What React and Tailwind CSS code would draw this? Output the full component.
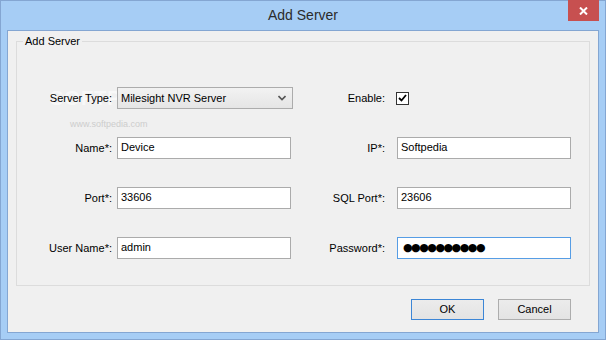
import React from "react";

const font = { fontFamily: '"Liberation Sans", Arial, sans-serif' };

function Label({ children, right }) {
  return (
    <div className={`relative z-10 flex items-center justify-end text-[11px] text-black ${right ? "pr-[12px]" : "pr-[5px]"}`}>
      {children}
    </div>
  );
}

function TextBox({ value, focused }) {
  return (
    <div
      className={`flex h-[22px] w-[174px] items-center border bg-white pb-[1px] pl-[3px] text-[11px] text-black ${
        focused ? "border-[#569de5]" : "border-[#ababab]"
      }`}
    >
      {value}
    </div>
  );
}

export default function App() {
  return (
    <div
      className="relative flex h-[340px] w-[606px] flex-col border border-[#84a6d2] bg-[#a6cdf5]"
      style={font}
    >
      {/* Title bar */}
      <div className="grid h-[29px] grid-cols-[1fr_auto_1fr]">
        <div />
        <div className="flex items-center pb-[1px] text-[14px] text-[#2b2b2b]">Add Server</div>
        <div className="flex justify-end pr-[6px]">
          <div className="-mt-[1px] flex h-[21px] w-[31px] items-center justify-center bg-[#c75050]">
            <svg width="9" height="8" viewBox="0 0 9 8">
              <path d="M1 0.5 L8 7.5 M8 0.5 L1 7.5" stroke="#ffffff" strokeWidth="2" />
            </svg>
          </div>
        </div>
      </div>

      {/* Client area */}
      <div className="relative mx-[6px] flex h-[303px] flex-col border border-[#84a6d2] bg-[#f0f0f0]">
        {/* watermark (behind controls) */}
        <div className="pointer-events-none absolute left-[42px] top-[57px] text-[20px] font-bold leading-[20px] tracking-[1px] text-white/60">
          SOFTPEDIA
        </div>
        <div className="pointer-events-none absolute left-[62px] top-[88px] text-[9px] leading-[10px] text-[#cdcdcd]">
          www.softpedia.com
        </div>

        <fieldset className="relative mx-[8px] mt-[4px] h-[251px] border border-[#dcdcdc] px-0">
          <legend className="ml-[6px] px-[2px] text-[11px] leading-[12px] text-black">Add Server</legend>
          <div className="grid grid-cols-[100px_174px_106px_174px] grid-rows-[22px_22px_22px_22px] gap-y-[28px] pt-[40px]">
            <Label>Server Type:</Label>
            <div className="relative z-10 flex h-[22px] w-[176px] items-center justify-between border border-[#acacac] bg-gradient-to-b from-[#f2f2f2] to-[#e5e5e5] pl-[3px] pr-[6px] text-[11px] text-black">
              <span>Milesight NVR Server</span>
              <svg width="8" height="6" viewBox="0 0 8 6">
                <path d="M0.5 1 L4 4.5 L7.5 1" stroke="#555555" strokeWidth="1.6" fill="none" />
              </svg>
            </div>
            <Label right>Enable:</Label>
            <div className="flex items-center">
              <div className="-ml-[1px] flex h-[13px] w-[13px] items-center justify-center border border-[#333333] bg-white">
                <svg width="9" height="8" viewBox="0 0 9 8">
                  <path d="M1 4 L3.5 6.5 L8 1" stroke="#000000" strokeWidth="1.8" fill="none" />
                </svg>
              </div>
            </div>

            <Label>Name*:</Label>
            <TextBox value="Device" />
            <Label right>IP*:</Label>
            <TextBox value="Softpedia" />

            <Label>Port*:</Label>
            <TextBox value="33606" />
            <Label right>SQL Port*:</Label>
            <TextBox value="23606" />

            <Label>User Name*:</Label>
            <TextBox value="admin" />
            <Label right>Password*:</Label>
            <div className="flex h-[22px] w-[174px] items-center border border-[#569de5] bg-white pl-[5px] text-black">
              <span
                className="text-[11px] leading-[12px] tracking-[-1.5px]"
                style={{ fontFamily: '"DejaVu Sans", sans-serif' }}
              >
                ●●●●●●●●●●
              </span>
            </div>
          </div>
        </fieldset>

        <div className="mt-[13px] flex justify-end gap-[14px] pr-[27px]">
          <div className="flex h-[21px] w-[73px] items-center justify-center border border-[#3c86d6] bg-gradient-to-b from-[#ececec] to-[#e3e3e3] text-[11px] text-black">
            OK
          </div>
          <div className="flex h-[21px] w-[73px] items-center justify-center border border-[#adadad] bg-gradient-to-b from-[#ececec] to-[#e3e3e3] text-[11px] text-black">
            Cancel
          </div>
        </div>
      </div>
    </div>
  );
}
